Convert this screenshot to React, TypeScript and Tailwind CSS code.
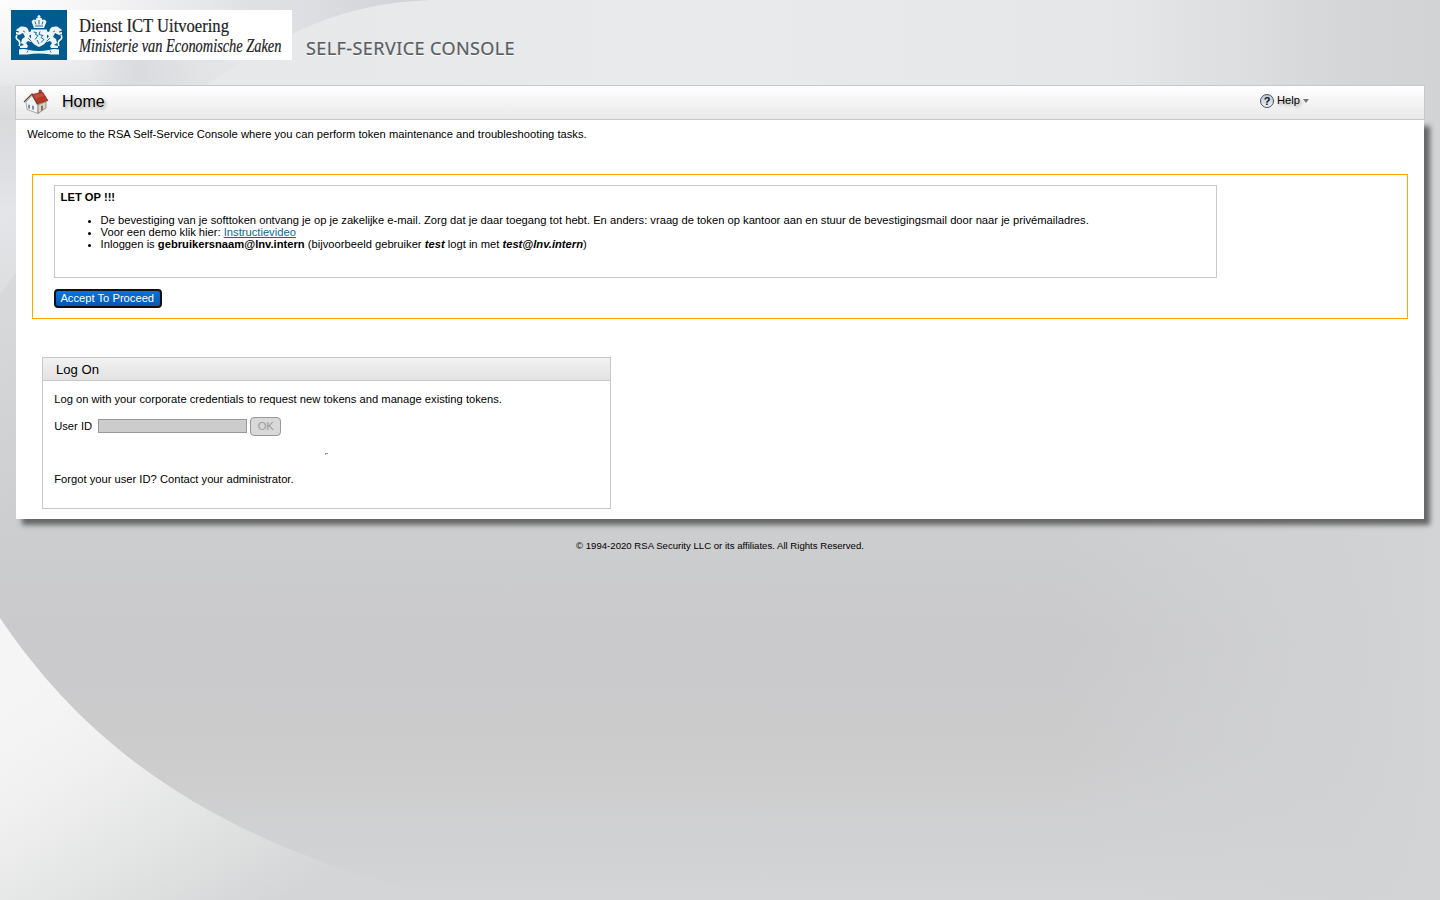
import React from "react";

function Backdrop() {
  return (
    <svg className="absolute inset-0 -z-10 h-[900px] w-[1440px]" viewBox="0 0 1440 900" preserveAspectRatio="none" aria-hidden="true">
      <defs>
        <linearGradient id="top" x1="0" x2="1440" y1="0" y2="0" gradientUnits="userSpaceOnUse">
          <stop offset="0" stopColor="#e6e7e9" />
          <stop offset="0.5" stopColor="#e9eaeb" />
          <stop offset="0.77" stopColor="#e6e7e8" />
          <stop offset="0.87" stopColor="#dcdddf" />
          <stop offset="0.93" stopColor="#d5d6d8" />
          <stop offset="1" stopColor="#d2d3d5" />
        </linearGradient>
        <radialGradient id="corner" cx="0" cy="0" r="1" gradientUnits="userSpaceOnUse" gradientTransform="matrix(250 0 0 110 0 0)">
          <stop offset="0" stopColor="#fdfdfd" />
          <stop offset="0.45" stopColor="#f3f3f4" />
          <stop offset="0.85" stopColor="#e4e5e7" />
          <stop offset="1" stopColor="#dbdcdf" />
        </radialGradient>
        <linearGradient id="streak" x1="150" x2="430" y1="0" y2="0" gradientUnits="userSpaceOnUse">
          <stop offset="0" stopColor="#eeeeef" stopOpacity="0" />
          <stop offset="0.6" stopColor="#dcdde0" />
          <stop offset="1" stopColor="#cfd0d3" />
        </linearGradient>
        <linearGradient id="lowstreak" x1="90" x2="250" y1="80" y2="40" gradientUnits="userSpaceOnUse">
          <stop offset="0" stopColor="#d9dadd" stopOpacity="0" />
          <stop offset="0.3" stopColor="#dadbde" />
          <stop offset="0.65" stopColor="#e2e3e5" />
          <stop offset="1" stopColor="#e7e8ea" />
        </linearGradient>
        <linearGradient id="strip" x1="0" x2="0" y1="85" y2="295" gradientUnits="userSpaceOnUse">
          <stop offset="0" stopColor="#e3e4e6" />
          <stop offset="0.15" stopColor="#d9dadc" />
          <stop offset="0.4" stopColor="#dddfe2" />
          <stop offset="0.6" stopColor="#e3e5e8" />
          <stop offset="1" stopColor="#dcdee0" />
        </linearGradient>
        <linearGradient id="field" x1="0" x2="0" y1="85" y2="900" gradientUnits="userSpaceOnUse">
          <stop offset="0" stopColor="#e0e1e3" />
          <stop offset="0.25" stopColor="#d8d9db" />
          <stop offset="0.53" stopColor="#cdcecf" />
          <stop offset="0.68" stopColor="#cacacc" />
          <stop offset="0.82" stopColor="#cccccd" />
          <stop offset="1" stopColor="#d4d5d6" />
        </linearGradient>
        <linearGradient id="side" x1="1060" x2="1440" y1="0" y2="0" gradientUnits="userSpaceOnUse">
          <stop offset="0" stopColor="#d3d4d6" stopOpacity="0" />
          <stop offset="0.75" stopColor="#d2d3d5" stopOpacity="0.8" />
          <stop offset="1" stopColor="#d3d4d6" />
        </linearGradient>
        <linearGradient id="glow" x1="40" x2="200" y1="690" y2="950" gradientUnits="userSpaceOnUse">
          <stop offset="0" stopColor="#f5f5f5" />
          <stop offset="0.3" stopColor="#f0f0f0" />
          <stop offset="0.7" stopColor="#e0e1e1" />
          <stop offset="1" stopColor="#d4d5d6" />
        </linearGradient>
      </defs>
      <rect width="1440" height="900" fill="url(#field)" />
      <rect x="1060" width="380" height="900" fill="url(#side)" />
      <rect width="1440" height="85" fill="url(#top)" />
      <rect x="1424" y="85" width="16" height="40" fill="url(#top)" />
      <path d="M0 85H16V272L0 294Z" fill="url(#strip)" />
      <path d="M0 0H430C350 3 280 30 205 86H0Z" fill="url(#corner)" />
      <path d="M90 60H245L205 86H90Z" fill="url(#lowstreak)" />
      <path d="M150 0H430C375 2 335 13 290 35V10H150Z" fill="url(#streak)" />
      <path d="M0 618C80 737 190 820 360 875L440 900H0Z" fill="url(#glow)" />
    </svg>
  );
}

function CoatOfArms() {
  return (
    <svg className="h-[50px] w-14 shrink-0 bg-[#015b91]" viewBox="0 0 56 50" fill="none" aria-hidden="true">
      <g fill="#eef5f9">
        <path d="M20.500 11.500l2-2 2 .5 1-2 1.800-.8V5h1.400v2.200l1.800.8 1 2 2-.5 2 2-2.500 6.500H23z" />
        <path d="M26.500 6h3v1h-3z" />
        <path d="M20 19.500h16v9.500c0 4-4 6-8 8-4-2-8-4-8-8z" />
        <path d="M8 18c1-2 7-2 9 1l1 3 3-1v3l-3 2 3 4-1 2-3-1-2 2 2 3-1 2H9v-2l4-1-3-2 1-4 3-2-2-4-4 2-3-1v-2l3 .5v-1l-3-1 1-1.500zM48 18c-1-2-7-2-9 1l-1 3-3-1v3l3 2-3 4 1 2 3-1 2 2-2 3 1 2h7v-2l-4-1 3-2-1-4-3-2 2-4 4 2 3-1v-2l-3 .5v-1l3-1-1-1.500z" />
        <path d="M8 39.500q5-1 10 .5 10 2 20 0 5-1.500 10-.5v5h-8q-12-2-24 0H8z" />
      </g>
      <path d="M8 36q2-4-1-6-3-2-1-5M48 36q-2-4 1-6 3-2 1-5" stroke="#eef5f9" strokeWidth="1.600" />
      <path d="M24 11.500l1 3M32 11.500l-1 3M28 10v4.500M24 16h8M22.500 22l3 .5-1 2 2.500 1-3 4M29 21.500l-1 3 4 1-2 2 3 2-3 3M26 30l2 4" stroke="#015b91" strokeWidth=".9" />
      <path d="M17 40.500l-1 2M39 40.500l1 2M12 21l2 1M44 21l-2 1M17 28l3 3M39 28l-3 3" stroke="#015b91" strokeWidth=".8" />
    </svg>
  );
}

function Logo() {
  return (
    <div className="flex h-[50px] w-[281px] bg-white">
      <CoatOfArms />
      <svg className="h-[50px] w-[225px]" viewBox="0 0 225 50" fontFamily="'Liberation Serif', serif" fill="#222" stroke="#222" strokeWidth=".2">
        <g transform="translate(12 22.300) scale(.92 1)">
          <text fontSize="18.200" textLength="163" lengthAdjust="spacingAndGlyphs">Dienst ICT Uitvoering</text>
        </g>
        <g transform="translate(12 42) scale(.8 1)">
          <text fontSize="18.200" fontStyle="italic" textLength="253" lengthAdjust="spacingAndGlyphs">Ministerie van Economische Zaken</text>
        </g>
      </svg>
    </div>
  );
}

function HouseIcon() {
  return (
    <svg className="h-[26px] w-[26px]" viewBox="0 0 26 26" aria-hidden="true">
      <path d="M3 13L9 6.500l6 9.500v8.500L4 20.500z" fill="#f1f2f3" stroke="#8b8b8b" strokeWidth=".7" />
      <path d="M15 16l8-3.500v6.500l-8 5.500z" fill="#dad5c6" stroke="#776e60" strokeWidth=".7" />
      <path d="M16 1h2.500v5H16z" fill="#a24e35" stroke="#693020" strokeWidth=".5" />
      <path d="M9 5.500L19.500 3l5.500 8.500L14.500 15z" fill="#b83825" stroke="#762115" strokeWidth=".6" />
      <path d="M10 5.800L19 4l2 3-8.500 2.500z" fill="#d16650" opacity=".5" />
      <path d="M1 13L9 5l5.500 10.500" fill="none" stroke="#704232" strokeWidth="1.200" />
      <path d="M5 15.500l2 .5v4l-2-.7zM9 16.500l2 .5v4l-2-.7z" fill="#7b91a5" />
      <path d="M18 17l2-.8v4.500l-2 1.300z" fill="#8c7355" />
    </svg>
  );
}

function HelpIcon() {
  return (
    <svg className="h-[15px] w-[15px]" viewBox="0 0 15 15" aria-hidden="true">
      <defs>
        <linearGradient id="ball" x2="0" y2="1">
          <stop stopColor="#b9c8dc" />
          <stop offset="1" stopColor="#eaf2f9" />
        </linearGradient>
      </defs>
      <circle cx="7" cy="7" r="6.500" fill="url(#ball)" stroke="#4b5158" />
      <text x="7" y="11" textAnchor="middle" fontFamily="'Liberation Sans', sans-serif" fontWeight="bold" fontSize="11" fill="#111">?</text>
    </svg>
  );
}

function Notice() {
  return (
    <section className="mx-4 mt-[33px] h-[145px] border border-[#faa800] pt-[10px] pl-[21px]">
      <div className="h-[93px] w-[1163px] border border-[#c8c8c8] px-[5.600px] pt-[5px]">
        <p className="font-bold leading-[13px]">LET OP !!!</p>
        <ul className="mt-[10px] list-disc pl-10 leading-3">
          <li>De bevestiging van je softtoken ontvang je op je zakelijke e-mail. Zorg dat je daar toegang tot hebt. En anders: vraag de token op kantoor aan en stuur de bevestigingsmail door naar je privémailadres.</li>
          <li>Voor een demo klik hier: <a href="#" className="text-[#046a9c] underline">Instructievideo</a></li>
          <li>Inloggen is <b>gebruikersnaam@lnv.intern</b> (bijvoorbeeld gebruiker <b><i>test</i></b> logt in met <b><i>test@lnv.intern</i></b>)</li>
        </ul>
      </div>
      <button className="mt-[11px] flex h-[19px] w-[108px] items-center justify-center rounded-[4px] border-2 border-[#101010] bg-linear-to-b from-[#0873e0] to-[#0558b0] pr-[1.500px] text-white">Accept To Proceed</button>
    </section>
  );
}

function LogOn() {
  return (
    <section className="mt-[38px] ml-[26px] h-[152px] w-[569px] border border-[#c8c8c8]">
      <h2 className="flex h-[23px] items-center border-b border-[#c8c8c8] bg-linear-to-b from-[#f2f2f2] to-[#e2e2e2] pt-[2px] pl-[13px] text-[13.100px]">Log On</h2>
      <div className="pl-[11.200px]">
        <p className="mt-3 leading-[13px]">Log on with your corporate credentials to request new tokens and manage existing tokens.</p>
        <div className="mt-[11px] flex h-[19px] items-center">
          <label htmlFor="uid" className="w-[43.800px]">User ID</label>
          <input id="uid" disabled className="mb-[1px] h-[14px] w-[149px] border border-[#999] bg-[#ccc]" />
          <button disabled className="ml-[3px] flex h-[19px] w-[31px] items-center justify-center rounded-[4px] border border-[#999] bg-[#d8d8d8] pl-[.5px] text-[#999]">OK</button>
        </div>
        <div className="mt-[17px] ml-[270.800px] h-[2px] w-[3px] border-t border-l border-[#999]" />
        <p className="mt-[18px] leading-[13px]">Forgot your user ID? Contact your administrator.</p>
      </div>
    </section>
  );
}

export default function App() {
  return (
    <div className="relative isolate h-[900px] w-[1440px] overflow-hidden font-['Liberation_Sans',Arial,sans-serif] text-[11.2px] text-black">
      <Backdrop />
      <header className="flex h-[85px] pt-[10px] pl-[11px]">
        <Logo />
        <h1 className="ml-[14px] pt-[26px] font-['Noto_Sans',sans-serif] text-[18px] leading-[25px] tracking-[0.42px] whitespace-nowrap text-[#585d62] [-webkit-text-stroke:0.2px_#585d62] [text-shadow:0_1px_0_#fff]">SELF-SERVICE CONSOLE</h1>
      </header>
      <div className="mx-[15px] flex h-[35px] justify-between border border-[#c8c8c8] bg-linear-to-b from-white to-[#e9e9e9] pl-[7px]">
        <div className="flex gap-[13px] pt-[3px]">
          <HouseIcon />
          <span className="text-[16px] leading-[25px] [text-shadow:2px_2px_3px_#aaa]">Home</span>
        </div>
        <div className="mr-[115px] flex h-[30px] items-center">
          <HelpIcon />
          <span className="mr-[3px] mb-[2px] ml-[2px] leading-3 [text-shadow:2px_2px_3px_#aaa]">Help</span>
          <svg className="h-1 w-[6px]" viewBox="0 0 6 4"><path d="M0 0h6L3 4z" fill="#777" /></svg>
        </div>
      </div>
      <main className="mx-4 flow-root h-[399px] bg-white shadow-[6px_6px_5px_#666]">
        <p className="mt-2 ml-[11.200px] leading-[13px]">Welcome to the RSA Self-Service Console where you can perform token maintenance and troubleshooting tasks.</p>
        <Notice />
        <LogOn />
      </main>
      <footer className="pt-[21px] text-center text-[9.600px] leading-3">© 1994-2020 RSA Security LLC or its affiliates. All Rights Reserved.</footer>
    </div>
  );
}
